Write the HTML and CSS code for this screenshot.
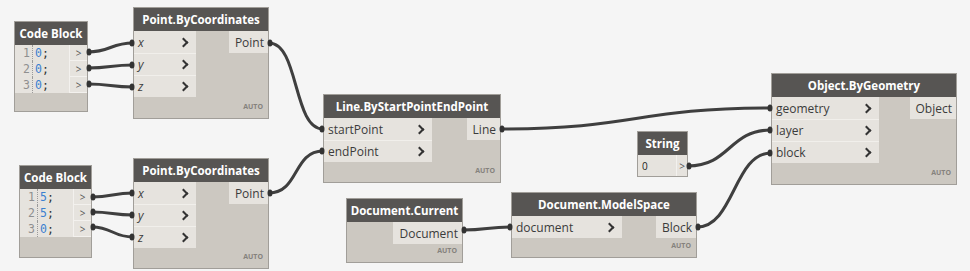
FILE: index.html
```html
<!DOCTYPE html>
<html lang="en">
  <head>
    <meta charset="UTF-8" />
    <title>Dynamo graph</title>
    <link rel="stylesheet" href="styles.css">
  </head>
  <body>
    <div class="canvas">
      <!-- code blocks -->
      <div class="node cb cb1">
        <div class="head">Code Block</div>
        <div class="cbody">
          <div class="code">
            <div class="ln"><span class="num">1</span><span class="src"><b>0</b>;</span></div>
            <div class="ln"><span class="num">2</span><span class="src"><b>0</b>;</span></div>
            <div class="ln"><span class="num">3</span><span class="src"><b>0</b>;</span></div>
          </div>
          <div class="cbouts">
            <div class="cbo">&gt;</div>
            <div class="cbo">&gt;</div>
            <div class="cbo">&gt;</div>
          </div>
        </div>
      </div>

      <div class="node cb cb2">
        <div class="head">Code Block</div>
        <div class="cbody">
          <div class="code">
            <div class="ln"><span class="num">1</span><span class="src"><b>5</b>;</span></div>
            <div class="ln"><span class="num">2</span><span class="src"><b>5</b>;</span></div>
            <div class="ln"><span class="num">3</span><span class="src"><b>0</b>;</span></div>
          </div>
          <div class="cbouts">
            <div class="cbo">&gt;</div>
            <div class="cbo">&gt;</div>
            <div class="cbo">&gt;</div>
          </div>
        </div>
      </div>

      <!-- points -->
      <div class="node pt1">
        <div class="head">Point.ByCoordinates</div>
        <div class="body">
          <div class="ins">
            <div class="in"><span class="it">x</span><i class="chev"></i></div>
            <div class="in"><span class="it">y</span><i class="chev"></i></div>
            <div class="in"><span class="it">z</span><i class="chev"></i></div>
          </div>
          <div class="outs"><div class="out">Point</div></div>
        </div>
        <div class="auto">AUTO</div>
      </div>

      <div class="node pt2">
        <div class="head">Point.ByCoordinates</div>
        <div class="body">
          <div class="ins">
            <div class="in"><span class="it">x</span><i class="chev"></i></div>
            <div class="in"><span class="it">y</span><i class="chev"></i></div>
            <div class="in"><span class="it">z</span><i class="chev"></i></div>
          </div>
          <div class="outs"><div class="out">Point</div></div>
        </div>
        <div class="auto">AUTO</div>
      </div>

      <div class="node line">
        <div class="head">Line.ByStartPointEndPoint</div>
        <div class="body">
          <div class="ins">
            <div class="in"><span>startPoint</span><i class="chev"></i></div>
            <div class="in"><span>endPoint</span><i class="chev"></i></div>
          </div>
          <div class="outs"><div class="out">Line</div></div>
        </div>
        <div class="auto">AUTO</div>
      </div>

      <div class="node str">
        <div class="head">String</div>
        <div class="sbody">
          <div class="sval">0</div>
          <div class="sout">&gt;</div>
        </div>
      </div>

      <div class="node obj">
        <div class="head">Object.ByGeometry</div>
        <div class="body">
          <div class="ins">
            <div class="in"><span>geometry</span><i class="chev"></i></div>
            <div class="in"><span>layer</span><i class="chev"></i></div>
            <div class="in"><span>block</span><i class="chev"></i></div>
          </div>
          <div class="outs"><div class="out">Object</div></div>
        </div>
        <div class="auto">AUTO</div>
      </div>

      <div class="node doccur">
        <div class="head">Document.Current</div>
        <div class="body">
          <div class="outs"><div class="out">Document</div></div>
        </div>
        <div class="auto">AUTO</div>
      </div>

      <div class="node ms">
        <div class="head">Document.ModelSpace</div>
        <div class="body">
          <div class="ins">
            <div class="in"><span>document</span><i class="chev"></i></div>
          </div>
          <div class="outs"><div class="out">Block</div></div>
        </div>
        <div class="auto">AUTO</div>
      </div>

      <svg class="wires" width="970" height="271" viewBox="0 0 970 271">
        <g fill="none" stroke="#3f3f3f" stroke-width="3">
          <path d="M88,52 C110,52 111,43 133,43" />
          <path d="M88,68 C110,68 111,65 133,65" />
          <path d="M88,84 C110,84 111,87 133,87" />
          <path d="M269,43 C299,43 293,129 323,129" />
          <path d="M92,197 C112,197 113,193 133,193" />
          <path d="M92,212 C112,212 113,215 133,215" />
          <path d="M92,227 C112,227 113,237 133,237" />
          <path d="M269,193 C299,193 293,151 323,151" />
          <path d="M501,129 C636,129 636,108 771,108" />
          <path d="M688,166 C730,166 729,130 771,130" />
          <path d="M463,230 C487,230 487,227 511,227" />
          <path d="M697,227 C734,227 734,153 771,153" />
        </g>
        <g fill="#333">
          <ellipse cx="89" cy="52" rx="2.5" ry="3.5" />
          <ellipse cx="89" cy="68" rx="2.5" ry="3.5" />
          <ellipse cx="89" cy="84" rx="2.5" ry="3.5" />
          <ellipse cx="132" cy="43" rx="2.5" ry="3.5" />
          <ellipse cx="132" cy="65" rx="2.5" ry="3.5" />
          <ellipse cx="132" cy="87" rx="2.5" ry="3.5" />
          <ellipse cx="270" cy="43" rx="2.5" ry="3.5" />
          <ellipse cx="322" cy="129" rx="2.5" ry="3.5" />
          <ellipse cx="93" cy="197" rx="2.5" ry="3.5" />
          <ellipse cx="93" cy="212" rx="2.5" ry="3.5" />
          <ellipse cx="93" cy="227" rx="2.5" ry="3.5" />
          <ellipse cx="132" cy="193" rx="2.5" ry="3.5" />
          <ellipse cx="132" cy="215" rx="2.5" ry="3.5" />
          <ellipse cx="132" cy="237" rx="2.5" ry="3.5" />
          <ellipse cx="270" cy="193" rx="2.5" ry="3.5" />
          <ellipse cx="322" cy="151" rx="2.5" ry="3.5" />
          <ellipse cx="502" cy="129" rx="2.5" ry="3.5" />
          <ellipse cx="770" cy="108" rx="2.5" ry="3.5" />
          <ellipse cx="689" cy="166" rx="2.5" ry="3.5" />
          <ellipse cx="770" cy="130" rx="2.5" ry="3.5" />
          <ellipse cx="464" cy="230" rx="2.5" ry="3.5" />
          <ellipse cx="510" cy="227" rx="2.5" ry="3.5" />
          <ellipse cx="698" cy="227" rx="2.5" ry="3.5" />
          <ellipse cx="770" cy="153" rx="2.5" ry="3.5" />
        </g>
      </svg>
    </div>
  </body>
</html>
```

FILE: styles.css
```css
body {
  margin: 0;
  background-color: #f5f5f5;
}
.canvas {
  position: relative;
  width: 970px;
  height: 271px;
  overflow: hidden;
  background-color: #f5f5f5;
  font-family: "Open Sans", "Noto Sans", sans-serif;
}
.wires {
  position: absolute;
  left: 0;
  top: 0;
  pointer-events: none;
}

/* node shell */
.node {
  position: absolute;
  box-sizing: border-box;
  display: flex;
  flex-direction: column;
  background-color: #ccc8c1;
  border: 1px solid #a19e99;
}
.head {
  height: 23px;
  flex: none;
  display: flex;
  align-items: center;
  justify-content: center;
  background-color: #575553;
  color: #ffffff;
  font-size: 11.5px;
  font-weight: 700;
  white-space: nowrap;
}
.body {
  display: flex;
  justify-content: space-between;
  align-items: flex-start;
}
.ins {
  background-color: #e6e3de;
}
.in {
  box-sizing: border-box;
  height: 22px;
  display: flex;
  align-items: center;
  justify-content: space-between;
  padding: 0 9px 0 4px;
  font-size: 12px;
  color: #3b3b3b;
  border-top: 1px solid #f1efeb;
}
.in:first-child {
  border-top: none;
}
.it {
  font-style: italic;
}
.chev {
  width: 5px;
  height: 5px;
  border-top: 2px solid #333;
  border-right: 2px solid #333;
  transform: rotate(45deg);
}
.outs {
  display: flex;
  flex-direction: column;
  align-items: flex-end;
  margin-left: auto;
}
.out {
  height: 22px;
  display: flex;
  align-items: center;
  padding: 0 4px 0 6px;
  background-color: #e6e3de;
  font-size: 12px;
  color: #3b3b3b;
}
.auto {
  margin-top: auto;
  padding: 0 5px 7px 0;
  text-align: right;
  font-size: 7px;
  font-weight: 700;
  color: #85827d;
}

/* placements */
.pt1 { left: 133px; top: 7px; width: 136px; height: 112px; }
.pt2 { left: 133px; top: 158px; width: 136px; height: 111px; }
.pt1 .ins, .pt2 .ins { width: 62px; }
.line { left: 323px; top: 94px; width: 178px; height: 89px; }
.line .ins { width: 108px; }
.obj { left: 771px; top: 73px; width: 186px; height: 112px; }
.obj .ins { width: 107px; }
.ms { left: 511px; top: 192px; width: 186px; height: 66px; }
.ms .ins { width: 110px; }
.doccur { left: 346px; top: 198px; width: 117px; height: 65px; }
.str { left: 637px; top: 131px; width: 51px; height: 46px; }
.cb1 { left: 14px; top: 21px; width: 74px; height: 91px; }
.cb2 { left: 19px; top: 165px; width: 73px; height: 93px; }

/* code block */
.cbody {
  display: flex;
  align-items: flex-start;
}
.code {
  flex: 1;
  background-color: #e6e3de;
  font-family: "DejaVu Sans Mono", monospace;
  font-size: 11.5px;
}
.ln {
  height: 16px;
  display: flex;
  align-items: center;
}
.num {
  width: 15px;
  padding-right: 2px;
  text-align: right;
  color: #8f8f8f;
  border-right: 1px dotted #9a9a9a;
  height: 16px;
  line-height: 16px;
}
.src {
  padding-left: 2px;
  color: #333;
}
.src b {
  font-weight: 400;
  color: #3a7fd0;
}
.cbouts {
  width: 17px;
  border-left: 1px solid #f3f1ee;
}
.cbo {
  box-sizing: border-box;
  height: 16px;
  display: flex;
  align-items: center;
  justify-content: center;
  background-color: #e6e3de;
  border-bottom: 1px solid #f3f1ee;
  font-size: 10px;
  color: #555;
}

/* string input */
.sbody {
  display: flex;
  height: 22px;
}
.sval {
  width: 34px;
  display: flex;
  align-items: center;
  padding-left: 4px;
  background-color: #e6e3de;
  font-size: 10px;
  color: #222;
}
.sout {
  flex: 1;
  display: flex;
  align-items: center;
  justify-content: center;
  background-color: #e6e3de;
  border-left: 1px solid #f3f1ee;
  font-size: 10px;
  color: #555;
}
```
